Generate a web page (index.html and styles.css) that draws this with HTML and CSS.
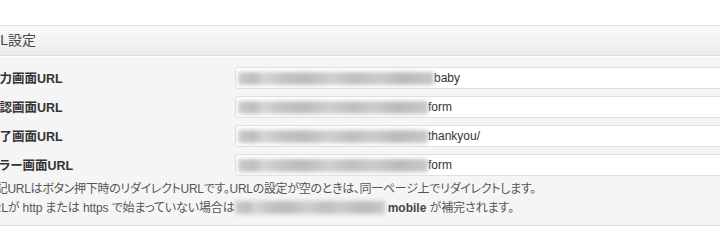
FILE: index.html
```html
<!DOCTYPE html>
<html lang="ja">
<head>
<meta charset="utf-8">
<title>URL設定</title>
<link rel="stylesheet" href="styles.css">
</head>
<body>
<div class="panel">
  <h3 class="hndle">URL設定</h3>
  <div class="inside">
    <div class="form">
      <label class="lbl">入力画面URL</label>
      <div class="field"><span class="redact r1"></span><span class="val">baby</span></div>
      <label class="lbl">確認画面URL</label>
      <div class="field"><span class="redact r2"></span><span class="val">form</span></div>
      <label class="lbl">完了画面URL</label>
      <div class="field"><span class="redact r2"></span><span class="val">thankyou/</span></div>
      <label class="lbl">エラー画面URL</label>
      <div class="field"><span class="redact r2"></span><span class="val">form</span></div>
    </div>
    <p class="help"><span class="l1">上記URLはボタン押下時のリダイレクトURLです。URLの設定が空のときは、同一ページ上でリダイレクトします。</span><br><span class="l2">URLが http または https で始まっていない場合は<span class="redact r3"></span><b>mobile</b> が補完されます。</span></p>
  </div>
</div>
</body>
</html>
```

FILE: styles.css
```css
html, body {
  margin: 0;
  padding: 0;
  background: #ffffff;
}
body {
  font-family: "Liberation Sans", "Noto Sans CJK JP", sans-serif;
  color: #333333;
  overflow: hidden;
}
.panel {
  margin: 25px 0 0 -20px;
  width: 900px;
  border-top: 1px solid #dfdfdf;
  border-bottom: 1px solid #dfdfdf;
  background: #f5f5f5;
}
.hndle {
  margin: 0;
  height: 29px;
  line-height: 29px;
  padding: 0;
  font-size: 14px;
  font-weight: normal;
  color: #464646;
  background: linear-gradient(to bottom, #f9f9f9, #ececec);
  border-bottom: 1px solid #dfdfdf;
}
.inside {
  border-top: 1px solid #ffffff;
  padding-top: 10px;
}
.form {
  display: grid;
  grid-template-columns: 248px 1fr;
  row-gap: 7px;
  padding-left: 7px;
  align-items: center;
}
.lbl {
  font-size: 12.5px;
  font-weight: bold;
  color: #333333;
  font-feature-settings: "palt";
  padding-bottom: 2px;
}
.field {
  height: 20px;
  border: 1px solid #dfdfdf;
  border-radius: 3px;
  background: #ffffff;
  display: flex;
  align-items: center;
  font-size: 12px;
  color: #333333;
  overflow: hidden;
}
.redact {
  display: inline-block;
  height: 13px;
  filter: blur(2.2px);
  background: linear-gradient(90deg, #cccccc 0, #bdbdbd 8%, #d6d6d6 14%, #c4c4c4 22%, #bbbbbb 35%, #cfcfcf 48%, #bfbfbf 60%, #cbcbcb 72%, #bababa 84%, #c8c8c8 100%);
}
.r1 { width: 196px; margin-left: 2px; }
.r2 { width: 190px; margin-left: 2px; }
.r3 {
  width: 150px;
  height: 13px;
  vertical-align: -2px;
  margin: 0 3px 0 0;
}
.help {
  margin: 3px 0 0;
  padding: 1px 0 7px 4px;
  font-size: 12px;
  line-height: 19px;
  color: #555555;
  font-feature-settings: "palt";
}
.l1 {
  letter-spacing: -0.3px;
}
.l2 {
  letter-spacing: -0.1px;
}
.help b {
  color: #464646;
  letter-spacing: 0;
}
```
